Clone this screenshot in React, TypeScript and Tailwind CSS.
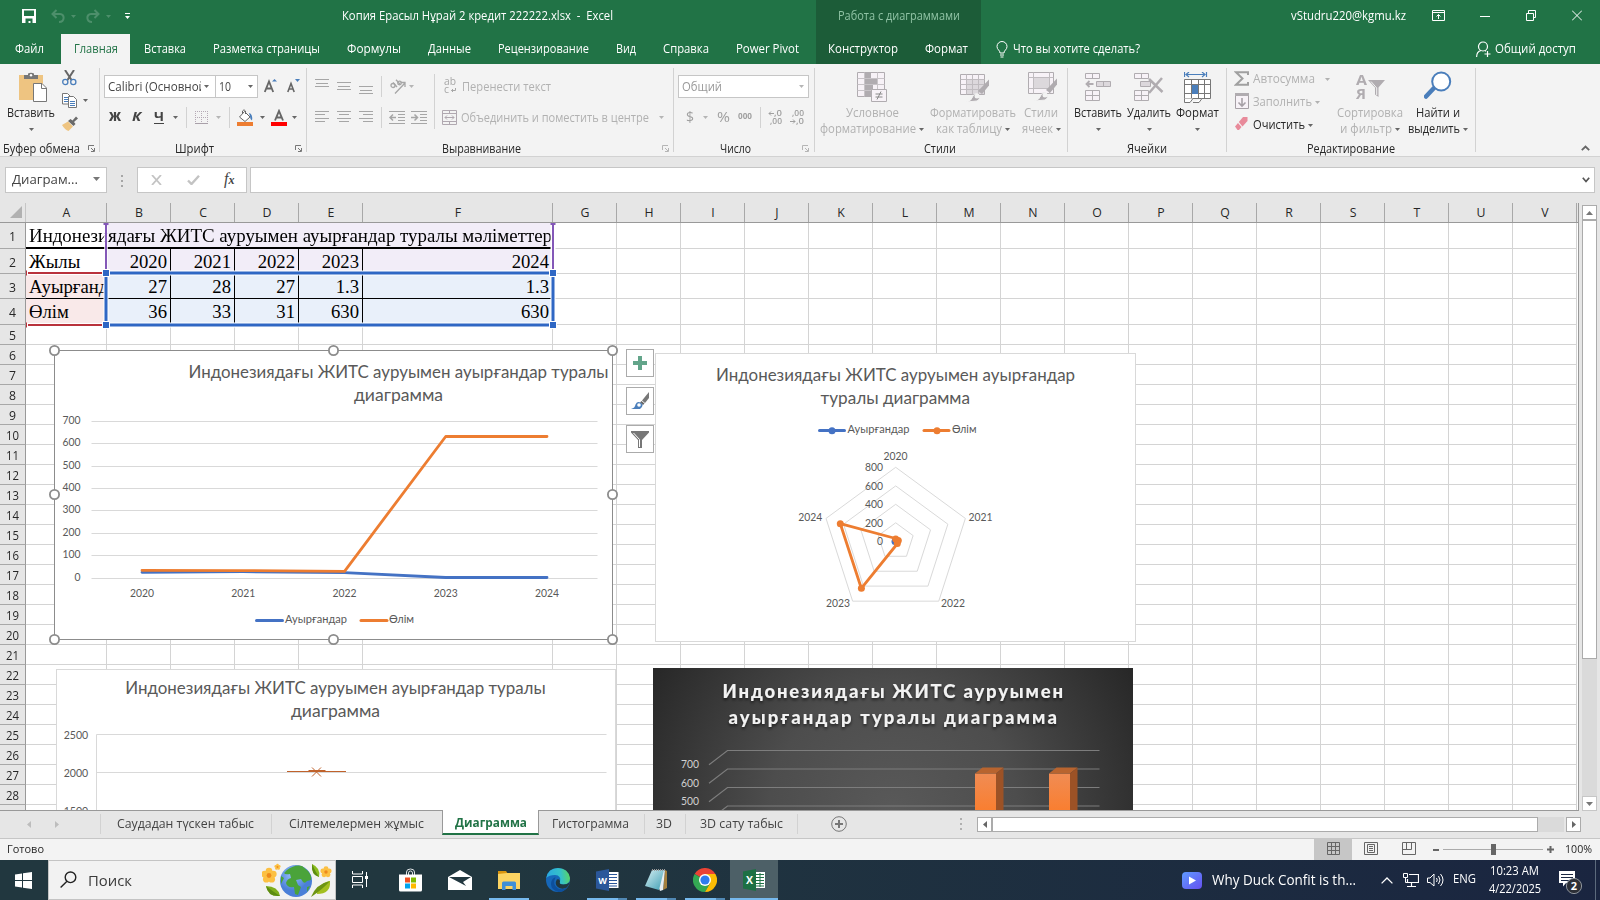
import { useLayoutEffect, useRef } from "react";
import type { ReactNode } from "react";

/* One-line label squeezed or stretched to the width of its box; `flat` drops the optical bottom padding. */
function Fit({ className = "", flat = false, children }: { className?: string; flat?: boolean; children: ReactNode }) {
  const outer = useRef<HTMLSpanElement>(null);
  const inner = useRef<HTMLSpanElement>(null);
  useLayoutEffect(() => {
    if (!outer.current || !inner.current) return;
    inner.current.style.transform = "none";
    const natural = inner.current.getBoundingClientRect().width;
    if (natural > 0) inner.current.style.transform = `scaleX(${outer.current.clientWidth / natural})`;
  });
  return (
    <span ref={outer} className={"block shrink-0 " + (flat ? "" : "pb-0.5 ") + className}>
      <span ref={inner} className="inline-block origin-left whitespace-pre align-top">
        {children}
      </span>
    </span>
  );
}

function Arrow({ className = "text-[#666]" }: { className?: string }) {
  return (
    <svg width="5" height="3" viewBox="0 0 5 3" className={"shrink-0 " + className}>
      <path d="M0 0h5L2.5 3z" fill="currentColor" />
    </svg>
  );
}

function Sep({ className = "" }: { className?: string }) {
  return <span className={"w-px shrink-0 bg-[#d2d2d2] " + className} />;
}

function Launcher({ className = "" }: { className?: string }) {
  return (
    <svg width="7" height="7" viewBox="0 0 7 7" className={"shrink-0 " + className}>
      <path d="M.5 5V.5H6M3 3l3 3M6.5 3v3.5H3" fill="none" stroke="currentColor" />
    </svg>
  );
}

/* ---------- title bar and tabs ---------- */

function TitleBar() {
  return (
    <header className="flex h-16 text-[11.8px] leading-4 text-white">
      <div className="w-[816px] bg-[#217346]">
        <div className="flex h-[34px] items-center pb-0.5">
          <svg width="14" height="14" viewBox="0 0 14 14" className="ml-[22px] shrink-0">
            <path d="M0 0h14v14H0z" fill="#fff" />
            <path d="M2 1.5h10V7H2zM3.5 9.5h7V14h-2v-2h-2v2h-3z" fill="#217346" />
          </svg>
          <svg width="14" height="14" viewBox="0 0 14 14" className="ml-[15px] shrink-0 text-[#4d8f6b]">
            <path d="M5.5 1L1.5 5l4 4M1.5 5H9c5 0 5 8-1 8" fill="none" stroke="currentColor" strokeWidth="2" />
          </svg>
          <Arrow className="ml-1.5 text-[#4d8f6b]" />
          <svg width="14" height="14" viewBox="0 0 14 14" className="ml-[10px] shrink-0 text-[#4d8f6b]">
            <path d="M8.5 1l4 4-4 4M12.5 5H5c-5 0-5 8 1 8" fill="none" stroke="currentColor" strokeWidth="2" />
          </svg>
          <Arrow className="ml-1.5 text-[#4d8f6b]" />
          <svg width="5" height="6" viewBox="0 0 5 6" className="ml-[14px] shrink-0">
            <path d="M0 0h5v1H0zM0 3h5L2.500 6z" fill="#fff" />
          </svg>
          <Fit className="ml-[212px] w-[271px]">Копия Ерасыл Нұрай 2 кредит 222222.xlsx  -  Excel</Fit>
        </div>
        <nav className="flex h-[30px] items-center">
          <Fit className="ml-[15px] w-[29px]">Файл</Fit>
          <div className="ml-[17px] flex h-[30px] w-[69px] items-center justify-center bg-[#f3f3f3] text-[#217346]">
            <Fit className="w-11">Главная</Fit>
          </div>
          <Fit className="ml-[14px] w-[42px]">Вставка</Fit>
          <Fit className="ml-[27px] w-[107px]">Разметка страницы</Fit>
          <Fit className="ml-[27px] w-[54px]">Формулы</Fit>
          <Fit className="ml-[27px] w-[43px]">Данные</Fit>
          <Fit className="ml-[27px] w-[91px]">Рецензирование</Fit>
          <Fit className="ml-[27px] w-[20px]">Вид</Fit>
          <Fit className="ml-[27px] w-[46px]">Справка</Fit>
          <Fit className="ml-[27px] w-[63px]">Power Pivot</Fit>
        </nav>
      </div>
      <div className="w-[165px] bg-[#1c5c38]">
        <div className="flex h-[34px] items-center pb-0.5 text-[#90c3a5]">
          <Fit className="ml-[22px] w-[122px]">Работа с диаграммами</Fit>
        </div>
        <div className="flex h-[30px] items-center">
          <Fit className="ml-3 w-[70px]">Конструктор</Fit>
          <Fit className="ml-[27px] w-[43px]">Формат</Fit>
        </div>
      </div>
      <div className="grow bg-[#217346]">
        <div className="flex h-[34px] items-center pb-0.5">
          <Fit className="ml-[310px] w-[115px]">vStudru220@kgmu.kz</Fit>
          <svg width="13" height="11" viewBox="0 0 13 11" fill="none" stroke="#fff" className="mb-0.5 ml-[26px] shrink-0">
            <path d="M.5.5h12v10H.5zM.5 2.500h12M6.500 9V4.500M4.500 6.500l2-2 2 2" />
          </svg>
          <span className="ml-[35px] h-px w-[10px] bg-white" />
          <svg width="10" height="11" viewBox="0 0 10 11" fill="none" stroke="#fff" className="mb-0.5 ml-[36px] shrink-0">
            <path d="M.5 3.500h7v7h-7zM2.500 3.500V.5h7v7H7.500" />
          </svg>
          <svg width="10" height="11" viewBox="0 0 10 11" fill="none" stroke="#fff" className="mb-0.5 ml-[36px] shrink-0">
            <path d="M0 .5l10 10M10 .5l-10 10" />
          </svg>
        </div>
        <div className="flex h-[30px] items-center">
          <svg width="12" height="17" viewBox="0 0 12 17" fill="none" stroke="#fff" className="ml-[15px] shrink-0">
            <path d="M4 12c0-3-3-3-3-6.500a5 5 0 0110 0C11 9 8 9 8 12zM4 14h4M4.500 16h3" />
          </svg>
          <Fit className="ml-[5px] w-[127px]">Что вы хотите сделать?</Fit>
          <svg width="15" height="17" viewBox="0 0 15 17" fill="none" stroke="#fff" strokeWidth="1.200" className="ml-[336px] shrink-0">
            <circle cx="7" cy="5.500" r="4.500" />
            <path d="M.6 16c0-4 2-6 4.500-6.500M9 9.500l1 .8M11.500 10v6M8.500 13h6" />
          </svg>
          <Fit className="ml-1 w-[81px]">Общий доступ</Fit>
        </div>
      </div>
    </header>
  );
}

/* ---------- ribbon ---------- */

function Group({ className, label, children }: { className: string; label: ReactNode; children: ReactNode }) {
  return (
    <section className={"flex h-[92px] shrink-0 " + className}>
      <div className="flex min-w-0 grow flex-col">
        <div className="h-[77px]">{children}</div>
        <div className="flex h-[15px] items-center">{label}</div>
      </div>
      <Sep className="mt-1 h-[84px]" />
    </section>
  );
}

function Big({ className = "", icon, first, second }: { className?: string; icon: ReactNode; first: ReactNode; second: ReactNode }) {
  return (
    <div className={"flex shrink-0 flex-col items-center pt-2 " + className}>
      <div className="flex h-[30px] items-center">{icon}</div>
      <div className="mt-[3px] flex h-4 items-center">{first}</div>
      <div className="flex h-4 items-center gap-[3px]">{second}</div>
    </div>
  );
}

function Lines({ className = "", d }: { className?: string; d: string }) {
  return (
    <svg width="14" height="12" viewBox="0 0 14 12" className={"shrink-0 text-[#a6a6a6] " + className}>
      <path d={d} stroke="currentColor" fill="none" />
    </svg>
  );
}

const GRAY = "text-[#b1b1b1]";

function Ribbon() {
  return (
    <div className="flex h-[93px] border-b border-[#d2d2d2] bg-[#f3f3f3] text-[11.8px] leading-4 text-[#262626]">
      <Group
        className="w-[100px]"
        label={
          <>
            <Fit className="ml-[3px] w-[77px]">Буфер обмена</Fit>
            <Launcher className="ml-[8px] text-[#777]" />
          </>
        }
      >
        <div className="flex">
          <Big
            className="w-[62px]"
            icon={
              <svg width="28" height="30" viewBox="0 0 28 30" className="ml-1">
                <path d="M0 3h24v25H0z" fill="#eec481" />
                <path d="M5 7V3h4V1.500Q12 0 15 1.500V3h4v4z" fill="#777" />
                <path d="M14.500 11.500H23l4.500 4.500v13.500h-13z" fill="#fff" stroke="#777" />
                <path d="M22.500 11.500V16.500h5" fill="none" stroke="#777" />
                <circle cx="12" cy="3.300" r="1.200" fill="#fff" />
              </svg>
            }
            first={<Fit className="w-12">Вставить</Fit>}
            second={<Arrow />}
          />
          <div className="flex flex-col pt-[6px]">
            <svg width="15" height="16" viewBox="0 0 15 16" fill="none">
              <path d="M3 0l6.500 10M12 0L5.500 10" stroke="#666" strokeWidth="2" />
              <circle cx="3.300" cy="12" r="2.600" stroke="#4a7ebb" strokeWidth="1.300" />
              <circle cx="11.300" cy="12" r="2.600" stroke="#4a7ebb" strokeWidth="1.300" />
            </svg>
            <div className="mt-[7px] flex h-[15px] items-center">
              <svg width="15" height="15" viewBox="0 0 15 15" fill="#fff" stroke="#777">
                <path d="M.5.5h5l3 3v7.500h-8z" />
                <path d="M2 4.500h4M2 6.500h4M2 8.500h4" stroke="#4a7ebb" />
                <path d="M6.500 3.500h5l3 3v8h-8z" />
                <path d="M8 8.500h5M8 10.500h5M8 12.500h5" stroke="#4a7ebb" />
              </svg>
              <Arrow className="ml-[6px] text-[#666]" />
            </div>
            <svg width="16" height="15" viewBox="0 0 16 15" className="mt-[8px]">
              <path d="M0 9l6-3.500 5 5L6.500 15Q3 14 0 9z" fill="#eec481" />
              <path d="M6 5l2.500-2 2 1.500L14 .5 16 2.500 12 6l1.500 2-2 2z" fill="#6a6a6a" />
            </svg>
          </div>
        </div>
      </Group>

      <Group
        className="w-[207px]"
        label={
          <>
            <Fit className="ml-[75px] w-[39px]">Шрифт</Fit>
            <Launcher className="ml-[81px] text-[#777]" />
          </>
        }
      >
        <div className="mt-[11px] flex h-[23px] items-center text-[#444]">
          <div className="ml-1 flex h-[23px] w-[112px] items-center border border-[#c6c6c6] bg-white pl-[3px]">
            <span className="w-[93px] overflow-hidden">
              <Fit className="w-[98px]">Calibri (Основной</Fit>
            </span>
            <Arrow className="ml-[3px] text-[#666]" />
          </div>
          <div className="-ml-px flex h-[23px] w-[43px] items-center border border-[#c6c6c6] bg-white pl-[3px]">
            <Fit className="w-[12px]">10</Fit>
            <Arrow className="ml-[17px] text-[#666]" />
          </div>
          <svg width="14" height="15" viewBox="0 0 14 15" className="mb-0.5 ml-1.5 shrink-0">
            <path d="M.8 14L5 3.500 9.200 14M2.500 10.500h5" fill="none" stroke="#666" strokeWidth="1.800" />
            <path d="M8 3.500h5L10.500 1z" fill="#4a7ebb" />
          </svg>
          <svg width="13" height="15" viewBox="0 0 13 15" className="mb-0.5 ml-[9px] shrink-0">
            <path d="M.8 14L4 5.500 7.200 14M2 11h4" fill="none" stroke="#666" strokeWidth="1.600" />
            <path d="M8 1h5l-2.500 3z" fill="#4a7ebb" />
          </svg>
        </div>
        <div className="mt-[7px] flex h-6 items-center text-[12.500px] font-bold text-[#444]">
          <Fit flat className="ml-[9px] w-3 font-extrabold">Ж</Fit>
          <Fit flat className="ml-[11px] w-[9px] italic">К</Fit>
          <Fit flat className="ml-[13px] w-[10px] border-b border-[#444] leading-[13px]">Ч</Fit>
          <Arrow className="ml-[9px] text-[#666]" />
          <Sep className="ml-2 h-[21px]" />
          <svg width="13" height="13" viewBox="0 0 13 13" className="ml-2 shrink-0">
            <path d="M.5 0v12M6.500 0v12M12.500 0v12M0 .5h13M0 6.500h13" stroke="#b5a9b5" strokeDasharray="1 1" fill="none" />
            <path d="M0 12.500h13" stroke="#a9a0a9" />
          </svg>
          <Arrow className="ml-2 text-[#b5b5b5]" />
          <Sep className="ml-2 h-[21px]" />
          <svg width="16" height="17" viewBox="0 0 16 17" className="ml-[7px] shrink-0">
            <path d="M7.500 2.500L13 8l-5 4.500L2.500 8zM5.500 5V2q1.500-2.500 3 0v3" fill="#fff" stroke="#666" />
            <path d="M12 4q4 1 3 7.500-2-1-2-4z" fill="#4a7ebb" />
            <path d="M0 13h16v4H0z" fill="#ed7d31" />
          </svg>
          <Arrow className="ml-[7px] text-[#666]" />
          <svg width="16" height="17" viewBox="0 0 16 17" className="ml-[6px] shrink-0">
            <path d="M4 11.500L8 2l4 9.500M5.500 8.500h5" fill="none" stroke="#666" strokeWidth="1.900" />
            <path d="M0 13h16v4H0z" fill="#f00" />
          </svg>
          <Arrow className="ml-[5px] text-[#666]" />
        </div>
      </Group>

      <Group
        className="w-[367px]"
        label={
          <>
            <Fit className="ml-[135px] w-[79px]">Выравнивание</Fit>
            <Launcher className="ml-[141px] text-[#b5b5b5]" />
          </>
        }
      >
        <div className={"flex pt-[10px] " + GRAY}>
          <div className="w-[127px]">
            <div className="flex h-6 items-center">
              <Lines className="mb-[7px] ml-2" d="M0 2.500h14M1 6.500h12M0 9.500h14" />
              <Lines className="ml-2" d="M0 2.500h14M1 6.500h12M0 9.500h14" />
              <Lines className="ml-2 mt-[8px]" d="M0 2.500h14M1 6.500h12M0 9.500h14" />
              <Sep className="ml-2 h-[21px]" />
              <svg width="16" height="15" viewBox="0 0 16 15" className="ml-2 shrink-0" fill="none" stroke="#a6a6a6">
                <path d="M5 14.500L15 4M15 8V3.500h-4.500" strokeWidth="1.300" />
                <circle cx="3" cy="6.500" r="2" strokeWidth="1.300" />
                <path d="M3 3.500l4 4.500M6 .8l4.500 5" strokeWidth="1.300" />
                <circle cx="9.500" cy="4" r="1.800" strokeWidth="1.300" />
              </svg>
              <Arrow className="ml-[3px] text-[#b5b5b5]" />
            </div>
            <div className="mt-[7px] flex h-6 items-center">
              <Lines className="ml-2" d="M0 .5h14M0 3.500h10M0 7.500h14M0 10.500h10" />
              <Lines className="ml-2" d="M0 .5h14M2 3.500h10M0 7.500h14M2 10.500h10" />
              <Lines className="ml-2" d="M0 .5h14M4 3.500h10M0 7.500h14M4 10.500h10" />
              <Sep className="ml-2 h-[21px]" />
              <svg width="16" height="13" viewBox="0 0 16 13" className="ml-[7px] shrink-0" fill="none" stroke="#a6a6a6">
                <path d="M0 .5h16M9 3.500h7M9 6.500h7M9 9.500h7M0 12.500h16" />
                <path d="M7 6.500H1M4 3.500L1 6.500l3 3" strokeWidth="1.500" />
              </svg>
              <svg width="16" height="13" viewBox="0 0 16 13" className="ml-1.5 shrink-0" fill="none" stroke="#a6a6a6">
                <path d="M0 .5h16M9 3.500h7M9 6.500h7M9 9.500h7M0 12.500h16" />
                <path d="M0 6.500h6.500M3.500 3.500l3 3-3 3" strokeWidth="1.500" />
              </svg>
            </div>
          </div>
          <Sep className="h-[55px]" />
          <div>
            <div className="mt-px flex h-6 items-center">
              <div className="mb-1 ml-[9px] flex w-3 flex-col text-[10px] leading-[9px] text-[#a6a6a6]">
                <Fit flat className="w-3">ab</Fit>
                <span className="flex h-2 items-center">
                  <Fit flat className="w-[5px]">c</Fit>
                  <svg width="5" height="5" viewBox="0 0 5 5" className="ml-0.5 mt-0.5" fill="none" stroke="currentColor">
                    <path d="M4.500 0v2.500H.5M2 1L.5 2.500 2 4" />
                  </svg>
                </span>
              </div>
              <Fit className="ml-1.5 w-[89px]">Перенести текст</Fit>
            </div>
            <div className="mt-1.5 flex h-6 items-center">
              <svg width="15" height="15" viewBox="0 0 15 15" className="ml-[7px] shrink-0" fill="none" stroke="#b0a8b0">
                <path d="M.5.5h14v14H.5zM.5 3.500h14M.5 11.500h14M7.500.5v3M7.500 11.500v3" />
                <path d="M3 7.500h9M5 5.500l-2 2 2 2M10 5.500l2 2-2 2" />
              </svg>
              <Fit flat className="ml-1 w-[188px]">Объединить и поместить в центре</Fit>
              <Arrow className="ml-[10px] text-[#b5b5b5]" />
            </div>
          </div>
        </div>
      </Group>

      <Group
        className="w-[141px]"
        label={
          <>
            <Fit className="ml-[46px] w-[31px]">Число</Fit>
            <Launcher className="ml-[51px] text-[#b5b5b5]" />
          </>
        }
      >
        <div className="ml-1 mt-[11px] flex h-[23px] w-[131px] items-center border border-[#c6c6c6] bg-white pl-[3px] text-[#999]">
          <Fit className="w-[40px]">Общий</Fit>
          <Arrow className="ml-[77px] text-[#b5b5b5]" />
        </div>
        <div className="mt-[7px] flex h-6 items-center text-[#a0a0a0]">
          <Fit className="ml-[12px] w-2 text-[15px]">$</Fit>
          <Arrow className="ml-[9px] text-[#b5b5b5]" />
          <Fit flat className="ml-[9px] w-[13px] text-[14.500px]">%</Fit>
          <Fit className="ml-2 w-[14px] text-[9px] font-bold">000</Fit>
          <Sep className="ml-2 h-[21px]" />
          <div className="ml-[7px] flex w-[14px] flex-col text-[8.300px] font-semibold leading-[8px]">
            <span className="flex items-center">
              <svg width="6" height="5" viewBox="0 0 6 5" fill="none" stroke="currentColor"><path d="M6 2.500H1M3 .5l-2 2 2 2" /></svg>
              <Fit flat className="w-2">,0</Fit>
            </span>
            <Fit flat className="ml-[2px] w-[12px]">,00</Fit>
          </div>
          <div className="ml-2 flex w-[14px] flex-col text-[8.300px] font-semibold leading-[8px]">
            <Fit flat className="ml-[2px] w-[12px]">,00</Fit>
            <span className="flex items-center">
              <svg width="6" height="5" viewBox="0 0 6 5" fill="none" stroke="currentColor"><path d="M0 2.500h5M3 .5l2 2-2 2" /></svg>
              <Fit flat className="w-2">,0</Fit>
            </span>
          </div>
        </div>
      </Group>

      <Group className="w-[253px]" label={<Fit className="ml-[109px] w-8">Стили</Fit>}>
        <div className={"flex " + GRAY}>
          <Big
            className="w-[114px]"
            icon={
              <svg width="31" height="30" viewBox="0 0 31 30">
                <path d="M.5.5h27v24H.5z" fill="#f7f2f7" stroke="#b0acb0" />
                <path d="M8 1h6v6H8zM8 7h12v6H8zM8 13h8v6H8zM8 19h6v6H8z" fill="#b0acb0" />
                <path d="M.5 6.500h27M.5 12.500h27M.5 18.500h27M7.500.5v24M20.500.5v24" stroke="#c8c4c8" fill="none" />
                <path d="M14.500 17.500h15v12h-15z" fill="#f7f2f7" stroke="#b0acb0" />
                <path d="M18.500 22h7M18.500 25h7M24 19.500l-4 8" stroke="#888" fill="none" />
              </svg>
            }
            first={<Fit className="w-[53px]">Условное</Fit>}
            second={
              <>
                <Fit className="w-[96px]">форматирование</Fit>
                <Arrow />
              </>
            }
          />
          <Big
            className="w-[87px]"
            icon={
              <svg width="30" height="30" viewBox="0 0 30 30" className="ml-1">
                <path d="M.5 2.500h24v20H.5z" fill="#f7f2f7" stroke="#b0acb0" />
                <path d="M6 8h18v14H6z" fill="#dcd8dc" />
                <path d="M.5 7.500h24M.5 12.500h24M.5 17.500h24M6.500 2.500v20M12.500 2.500v20M18.500 2.500v20" stroke="#c0bcc0" fill="none" />
                <path d="M29 7.500v6L22 22l-4-3z" fill="#b0acb0" />
                <path d="M6.500 30q5-1 6.500-6 2-4 5.500-1.500Q21 27 17 29z" fill="#b0acb0" stroke="#f3f3f3" />
                <circle cx="17" cy="24" r="2.500" fill="#f3f3f3" />
              </svg>
            }
            first={<Fit className="w-[86px]">Форматировать</Fit>}
            second={
              <>
                <Fit className="w-[66px]">как таблицу</Fit>
                <Arrow />
              </>
            }
          />
          <Big
            className="w-[50px]"
            icon={
              <svg width="30" height="30" viewBox="0 0 30 30" className="ml-1">
                <path d="M.5.5h25v21H.5z" fill="#f7f2f7" stroke="#b0acb0" />
                <path d="M6 6h15v10H6z" fill="#dcd8dc" />
                <path d="M.5 5.500h25M.5 16.500h25M5.500.5v21M21.500.5v21" stroke="#c0bcc0" fill="none" />
                <path d="M29 6.500v6L22 21l-4-3z" fill="#b0acb0" />
                <path d="M6.500 29q5-1 6.500-6 2-4 5.500-1.500Q21 26 17 28z" fill="#b0acb0" stroke="#f3f3f3" />
                <circle cx="17" cy="23" r="2.500" fill="#f3f3f3" />
              </svg>
            }
            first={<Fit className="w-[34px]">Стили</Fit>}
            second={
              <>
                <Fit className="w-[31px]">ячеек</Fit>
                <Arrow />
              </>
            }
          />
        </div>
      </Group>

      <Group className="w-[159px]" label={<Fit className="ml-[59px] w-10">Ячейки</Fit>}>
        <div className="flex pl-1">
          <Big
            className="w-[52px]"
            icon={
              <svg width="27" height="28" viewBox="0 0 27 28" fill="#f7f2f7" stroke="#b0acb0" className="mb-px">
                <path d="M.5.5h14v5H.5zM7.500.5v5M.5 17.500h14v10H.5zM.5 22.500h14M7.500 17.500v10" />
                <path d="M11.500 8.500h14v5h-14zM18.500 8.500v5" fill="#dcd8dc" />
                <path d="M1.500 11h7M4.500 8l-3 3 3 3" fill="none" strokeWidth="1.800" />
              </svg>
            }
            first={<Fit className="w-[48px]">Вставить</Fit>}
            second={<Arrow />}
          />
          <Big
            className="w-[50px]"
            icon={
              <svg width="30" height="28" viewBox="0 0 30 28" fill="#f7f2f7" stroke="#b0acb0" className="mb-px">
                <path d="M.5.5h14v5H.5zM7.500.5v5M.5 17.500h14v10H.5zM.5 22.500h14M7.500 17.500v10" />
                <path d="M6.500 8.500h10v5h-10z" fill="#dcd8dc" />
                <path d="M15 6l13.500 13M28 5L15 20" fill="none" strokeWidth="2.500" />
              </svg>
            }
            first={<Fit className="w-11">Удалить</Fit>}
            second={<Arrow />}
          />
          <Big
            className="w-[47px]"
            icon={
              <svg width="28" height="31" viewBox="0 0 28 31" fill="none" className="ml-px">
                <path d="M.5 0v5M22.500 0v5M2 2.500h19M5 0L2 2.500 5 5M18 0l3 2.500L18 5" stroke="#4a7ebb" strokeWidth="1.200" />
                <path d="M.5 7.500h26v19H.5zM7.500 7.500v19M14.500 7.500v19M20.500 7.500v19M.5 12.500h26M.5 21.500h26" stroke="#777" fill="#fff" />
                <path d="M8 13h6v9H8z" fill="#4a7ebb" />
                <path d="M.5 26.500v4H6l3-4M9 30.500h6l3-4" stroke="#777" fill="#fff" />
              </svg>
            }
            first={<Fit className="w-[43px]">Формат</Fit>}
            second={<Arrow />}
          />
        </div>
      </Group>

      <Group className="w-[249px]" label={<Fit className="ml-[80px] w-[88px]">Редактирование</Fit>}>
        <div className="flex">
          <div className={"w-[109px] pt-[4px] " + GRAY}>
            <div className="flex h-[22px] items-center">
              <svg width="15" height="15" viewBox="0 0 15 15" className="mb-0.5 ml-[7px] shrink-0">
                <path d="M14 4V1.200H2L8.500 7.500 2 13.800h12V11" fill="none" stroke="#a0a0a0" strokeWidth="2" />
              </svg>
              <Fit className="ml-1 w-[62px]">Автосумма</Fit>
              <Arrow className="ml-[10px]" />
            </div>
            <div className="mt-px flex h-[22px] items-center">
              <svg width="14" height="16" viewBox="0 0 14 16" className="mb-0.5 ml-2 shrink-0" fill="none" stroke="#a6a0a6">
                <path d="M.5.5h13v15H.5z" fill="#f7f2f7" />
                <path d="M0 0h14v3H0z" fill="#b0acb0" stroke="none" />
                <path d="M7 5v8M3.500 9.500L7 13l3.500-3.500" strokeWidth="1.600" />
              </svg>
              <Fit className="ml-1 w-[59px]">Заполнить</Fit>
              <Arrow className="ml-[3px]" />
            </div>
            <div className="mt-px flex h-[22px] items-center text-[#262626]">
              <svg width="13" height="13" viewBox="0 0 13 13" className="mb-[3px] ml-2 shrink-0">
                <path d="M8 0h4.500v4L7.500 9.500 3.800 5z" fill="#e88a9a" />
                <path d="M3 6l3.500 4L4 13H2.500L0 9.500z" fill="#e88a9a" />
              </svg>
              <Fit className="ml-[5px] w-[52px]">Очистить</Fit>
              <Arrow className="ml-[3px] text-[#666]" />
            </div>
          </div>
          <Big
            className={"w-[68px] " + GRAY}
            icon={
              <div className="flex gap-px text-[#b0acb0]">
                <div className="flex w-[11px] flex-col text-[14.500px] font-bold leading-[14px]">
                  <Fit flat className="w-[11px]">А</Fit>
                  <Fit flat className="w-[10px]">Я</Fit>
                </div>
                <svg width="17" height="18" viewBox="0 0 17 18" className="mt-[7px]">
                  <path d="M0 0h17L10.500 7.500V17L7 14.500v-7z" fill="#b0acb0" />
                  <path d="M3 1.500L8.700 8v7" stroke="#f3f3f3" fill="none" />
                </svg>
              </div>
            }
            first={<Fit className="w-[66px]">Сортировка</Fit>}
            second={
              <>
                <Fit className="w-[52px]">и фильтр</Fit>
                <Arrow />
              </>
            }
          />
          <Big
            className="w-[67px]"
            icon={
              <svg width="28" height="28" viewBox="0 0 28 28" className="mb-1">
                <path d="M10 17L2 25.500" stroke="#4a7ebb" strokeWidth="4.500" strokeLinecap="round" />
                <circle cx="17.200" cy="10.500" r="9" fill="#fff" stroke="#4a7ebb" strokeWidth="2" />
              </svg>
            }
            first={<Fit className="w-11">Найти и</Fit>}
            second={
              <>
                <Fit className="w-[52px]">выделить</Fit>
                <Arrow className="text-[#666]" />
              </>
            }
          />
        </div>
      </Group>
      <svg width="9" height="6" viewBox="0 0 9 6" className="ml-[105px] mt-[81px]">
        <path d="M.8 5.200l3.700-3.700 3.700 3.700" fill="none" stroke="#666" strokeWidth="1.800" />
      </svg>
    </div>
  );
}

function FormulaBar() {
  return (
    <div className="flex h-[46px] items-start bg-[#e6e6e6] pt-[10px] text-[#444]">
      <div className="ml-[5px] flex h-[26px] w-[102px] items-center border border-[#c6c6c6] bg-white pl-[6px] text-[13px]">
        <Fit flat className="w-[66px]">Диаграм...</Fit>
        <svg width="7" height="4" viewBox="0 0 7 4" className="mb-0.5 ml-[15px]">
          <path d="M0 0h7L3.500 4z" fill="#777" />
        </svg>
      </div>
      <div className="ml-[14px] mt-2 flex w-[2px] flex-col gap-[3px]">
        <i className="h-[2px] bg-[#a6a6a6]" />
        <i className="h-[2px] bg-[#a6a6a6]" />
        <i className="h-[2px] bg-[#a6a6a6]" />
      </div>
      <div className="ml-[14px] flex h-[26px] w-[110px] items-center border border-[#c6c6c6] bg-white">
        <svg width="11" height="10" viewBox="0 0 11 10" className="ml-[13px]">
          <path d="M1 0l9 10M10 0L1 10" stroke="#c3c3c3" strokeWidth="1.800" />
        </svg>
        <svg width="13" height="10" viewBox="0 0 13 10" className="ml-[25px]">
          <path d="M1 5.500l3.500 3.500L12 .8" stroke="#c3c3c3" strokeWidth="2.400" fill="none" />
        </svg>
        <span className="ml-[24px] pb-0.5 font-['Liberation_Serif',serif] text-[16px] italic leading-4 text-[#444]">
          f<span className="text-[12px] font-bold">x</span>
        </span>
      </div>
      <div className="ml-[3px] flex h-[26px] w-[1345px] items-center justify-end border border-[#c6c6c6] bg-white pr-[4px]">
        <svg width="8" height="6" viewBox="0 0 8 6">
          <path d="M.8.8L4 4.500 7.200.8" fill="none" stroke="#555" strokeWidth="1.700" />
        </svg>
      </div>
    </div>
  );
}

/* ---------- charts ---------- */

type TProps = { x: number; y: number; w?: number; s: number; a?: "start" | "middle" | "end"; f?: string; children: string };

/* Chart label: y is the vertical middle of the capitals. */
function T({ x, y, w, s, a = "start", f = "#595959", children }: TProps) {
  return (
    <text x={x} y={y + s * 0.36} fontSize={s} textAnchor={a} fill={f} textLength={w} lengthAdjust="spacingAndGlyphs">
      {children}
    </text>
  );
}

const CHART = "absolute font-[Lato,'Open_Sans',sans-serif]";

function LineChart() {
  const ticks = [421.5, 443.5, 466.5, 488.5, 510.5, 533.5, 555.5, 578.5];
  const years = [142, 243.2, 344.5, 445.7, 547];
  const handles = [
    [54.5, 350.5], [333.5, 350.5], [612.5, 350.5], [54.5, 494.5], [612.5, 494.5], [54.5, 639.5], [333.5, 639.5], [612.5, 639.5],
  ];
  return (
    <svg className={CHART + " left-[44px] top-[137px]"} width="580" height="310" viewBox="44 340 580 310">
      <rect x="54.500" y="350.500" width="558" height="289" fill="#fff" stroke="#8c8c8c" />
      <T x={188.500} y={371.500} w={420} s={17}>Индонезиядағы ЖИТС ауруымен ауырғандар туралы</T>
      <T x={354} y={394.500} w={89} s={17}>диаграмма</T>
      {ticks.map((y, i) => (
        <g key={y}>
          <path d={`M91.500 ${y}H597.500`} stroke="#d9d9d9" />
          <T x={80.500} y={y - 1} w={i === 7 ? 6 : 18} s={10.800} a="end">{String(700 - i * 100)}</T>
        </g>
      ))}
      {years.map((x, i) => (
        <T key={x} x={x} y={593.300} w={24} s={10.800} a="middle">{String(2020 + i)}</T>
      ))}
      <path d="M142 572.300L243 571.700 344.500 572.600 445.700 577.500H547" fill="none" stroke="#4472c4" strokeWidth="2.800" strokeLinecap="round" />
      <path d="M142 570.300L243 570.600 344.500 571.300 445.700 436.500H547" fill="none" stroke="#ed7d31" strokeWidth="2.800" strokeLinecap="round" strokeLinejoin="round" />
      <path d="M256.500 620.500H282.500" stroke="#4472c4" strokeWidth="3" strokeLinecap="round" />
      <T x={285} y={619.500} w={62} s={10.800}>Ауырғандар</T>
      <path d="M361 620.500H387" stroke="#ed7d31" strokeWidth="3" strokeLinecap="round" />
      <T x={389} y={619.500} w={25} s={10.800}>Өлім</T>
      {handles.map(([x, y]) => (
        <circle key={`${x}-${y}`} cx={x} cy={y} r="4.600" fill="#fff" stroke="#8c8c8c" strokeWidth="1.800" />
      ))}
    </svg>
  );
}

function ChartButtons() {
  return (
    <div className="absolute left-[626px] top-[146px] flex flex-col gap-[10px]">
      <span className="flex h-7 w-7 items-center justify-center border border-[#ababab] bg-white">
        <svg width="14" height="14" viewBox="0 0 14 14">
          <path d="M5 0h4v5h5v4H9v5H5V9H0V5h5z" fill="#63a58a" />
        </svg>
      </span>
      <span className="flex h-7 w-7 items-center justify-center border border-[#ababab] bg-white">
        <svg width="18" height="18" viewBox="0 0 18 18">
          <path d="M18 0v6l-4 5-3-2.500z" fill="#777" />
          <path d="M10.500 9l3 2.500-1.500 1.500L9 10.500z" fill="#666" />
          <path d="M0 17q4-1 4.500-4.500Q6.500 8.500 10 11t-1 6z" fill="#4a7ebb" />
          <circle cx="8" cy="13" r="1.800" fill="#fff" />
        </svg>
      </span>
      <span className="flex h-7 w-7 items-center justify-center border border-[#ababab] bg-white">
        <svg width="18" height="17" viewBox="0 0 18 17">
          <path d="M0 0h18v1.500L11 9v8H7V9L0 1.500z" fill="#777" />
          <path d="M2.500 2L8.500 8.500V16" stroke="#fff" fill="none" />
        </svg>
      </span>
    </div>
  );
}

function RadarChart() {
  const cx = 895.7;
  const cy = 541.3;
  const ring = (r: number) =>
    [0, 1, 2, 3, 4]
      .map((i) => {
        const t = (i * 2 * Math.PI) / 5;
        return `${cx + r * 0.99 * Math.sin(t)},${cy - r * Math.cos(t)}`;
      })
      .join(" ");
  const labels = [467.3, 486, 504.3, 523.3, 541];
  return (
    <svg className={CHART + " left-[655px] top-[150px]"} width="481" height="289" viewBox="655 353 481 289">
      <rect x="655.500" y="353.500" width="480" height="288" fill="#fff" stroke="#d9d9d9" />
      <T x={716} y={374.500} w={359} s={17}>Индонезиядағы ЖИТС ауруымен ауырғандар</T>
      <T x={820.500} y={397.500} w={149.500} s={17}>туралы диаграмма</T>
      <path d="M819.500 430.500H844.500" stroke="#4472c4" strokeWidth="3" strokeLinecap="round" />
      <circle cx="832" cy="430.800" r="3.500" fill="#4472c4" />
      <T x={847.500} y={429} w={62} s={11}>Ауырғандар</T>
      <path d="M924 430.500H949" stroke="#ed7d31" strokeWidth="3" strokeLinecap="round" />
      <circle cx="937" cy="430.800" r="3.500" fill="#ed7d31" />
      <T x={952} y={429} w={24.500} s={11}>Өлім</T>
      {[18.5, 37, 55.4, 74].map((r) => (
        <polygon key={r} points={ring(r)} fill="none" stroke="#d9d9d9" />
      ))}
      {labels.map((y, i) => (
        <T key={y} x={883} y={y} w={i === 4 ? 6 : 18} s={11} a="end">{String(800 - i * 200)}</T>
      ))}
      <T x={895.500} y={456} w={24} s={11} a="middle">2020</T>
      <T x={968.500} y={517} w={24} s={11}>2021</T>
      <T x={941} y={603.300} w={24} s={11}>2022</T>
      <T x={826} y={603.300} w={24} s={11}>2023</T>
      <T x={798.300} y={517} w={24} s={11}>2024</T>
      <circle cx="895" cy="541.500" r="3.500" fill="#4472c4" />
      <path d="M895.700 538.500L898.500 540.500 897.500 543.500 861.300 588.300 840.300 523.700z" fill="none" stroke="#ed7d31" strokeWidth="2.800" strokeLinejoin="round" />
      {[[895.7, 539], [898.3, 540.6], [897.3, 543.6], [861.4, 588.3], [840.3, 523.7]].map(([x, y]) => (
        <circle key={x} cx={x} cy={y} r="3.500" fill="#ed7d31" />
      ))}
    </svg>
  );
}

function BoxChart() {
  return (
    <svg className={CHART + " left-[56px] top-[466px]"} width="561" height="150" viewBox="56 669 561 150">
      <rect x="56.500" y="669.500" width="559" height="290" fill="#fff" stroke="#d9d9d9" />
      <T x={125.200} y={687.500} w={420.500} s={17}>Индонезиядағы ЖИТС ауруымен ауырғандар туралы</T>
      <T x={291} y={710.500} w={89} s={17}>диаграмма</T>
      <path d="M96.500 840V734.500H606.500M96.500 772.500H606.500" fill="none" stroke="#d9d9d9" />
      <T x={63.700} y={735} w={24.500} s={10.800}>2500</T>
      <T x={63.700} y={773} w={24.500} s={10.800}>2000</T>
      <T x={63.700} y={811} w={24.500} s={10.800}>1500</T>
      <path d="M287 771.500H346M308.500 770.500H325.500" stroke="#c0622b" />
      <path d="M312 767.500l9 9M321 767.500l-9 9" stroke="#c0622b" />
    </svg>
  );
}

function DarkChart() {
  return (
    <svg className={CHART + " left-[653px] top-[465px]"} width="480" height="150" viewBox="653 668 480 150">
      <defs>
        <radialGradient id="dark" gradientUnits="userSpaceOnUse" cx="893" cy="812" r="275">
          <stop offset="0" stopColor="#595959" />
          <stop offset="0.450" stopColor="#4d4d4d" />
          <stop offset="1" stopColor="#282828" />
        </radialGradient>
        <linearGradient id="bar" x1="0" x2="0" y1="0" y2="1">
          <stop offset="0" stopColor="#f08c54" />
          <stop offset="1" stopColor="#fa7d2d" />
        </linearGradient>
        <filter id="sh" x="-5%" y="-20%" width="110%" height="160%">
          <feDropShadow dx="0" dy="2" stdDeviation="1.500" floodColor="#000" floodOpacity="0.600" />
        </filter>
      </defs>
      <rect x="653" y="668" width="480" height="288" fill="url(#dark)" />
      <g filter="url(#sh)" fontWeight="900">
        <text x="722.500" y="698" fontSize="18.500" fill="#f2f2f2" letterSpacing="1" textLength="341.500" lengthAdjust="spacing">
          Индонезиядағы ЖИТС ауруымен
        </text>
        <text x="728.500" y="724" fontSize="18.500" fill="#f2f2f2" letterSpacing="1" textLength="329.500" lengthAdjust="spacing">
          ауырғандар туралы диаграмма
        </text>
      </g>
      {[750.5, 769, 787.5, 806].map((y) => (
        <path key={y} d={`M709 ${y + 14.3}L727.500 ${y}H1099.500`} fill="none" stroke="#7d7d7d" strokeWidth="1.200" />
      ))}
      <T x={681} y={764.500} w={18} s={11} f="#d0d0d0">700</T>
      <T x={681} y={783.300} w={18} s={11} f="#d0d0d0">600</T>
      <T x={681} y={801.500} w={18} s={11} f="#d0d0d0">500</T>
      {[975, 1049].map((x) => (
        <g key={x}>
          <path d={`M${x} 773.500h21v40h-21z`} fill="url(#bar)" />
          <path d={`M${x} 773.500l7.500-6h21l-7.500 6z`} fill="#b8642f" />
          <path d={`M${x + 21} 773.500l7.500-6v50h-7.500z`} fill="#9c5226" />
        </g>
      ))}
    </svg>
  );
}

/* ---------- sheet ---------- */

const COLS: [string, string][] = [
  ["A", "w-[81px]"], ["B", "w-16"], ["C", "w-16"], ["D", "w-16"], ["E", "w-16"], ["F", "w-[190px]"],
  ..."GHIJKLMNOPQRSTUV".split("").map((c): [string, string] => [c, "w-16"]),
];

const DATA: Record<number, string[]> = {
  2: ["Жылы", "2020", "2021", "2022", "2023", "2024"],
  3: ["Ауырғандар", "27", "28", "27", "1.3", "1.3"],
  4: ["Өлім", "36", "33", "31", "630", "630"],
};

function rowHeight(n: number) {
  if (n === 1 || n === 4) return "h-[26px]";
  if (n === 2 || n === 3) return "h-[25px]";
  return "h-5";
}

function cellFill(n: number, c: number) {
  if (c > 5 || n > 4) return "";
  if (c === 0) return n > 2 ? " bg-[#f9e9e9]" : "";
  return n > 2 ? " bg-[#e9f0fa]" : " bg-[#f2edf8]";
}

function cellLine(n: number, c: number) {
  if (c > 5 || n > 4) return " border-[#d4d4d4]";
  const right = n === 1 || c === 0 ? " border-r-transparent" : c < 5 ? " border-r-black" : " border-r-[#d4d4d4]";
  const bottom = n === 1 || n === 3 ? " border-b-black" : n === 2 ? " border-b-transparent" : " border-b-[#d4d4d4]";
  return right + bottom;
}

function RangeMarks() {
  return (
    <svg className="absolute left-[20px] top-[17px]" width="545" height="115" viewBox="20 220 545 115" fill="none">
      <path d="M26 248H551" stroke="#000" strokeWidth="2" />
      <path d="M26.500 273H104M26.500 325H104" stroke="#fff" strokeWidth="4" />
      <path d="M26.500 270.500v5M26.500 322.500v5" stroke="#b9323c" />
      <path d="M28 273H104M28 325H104" stroke="#b9323c" strokeWidth="2" />
      <path d="M553 223V270" stroke="#fff" strokeWidth="5" />
      <path d="M106 226V270" stroke="#fff" strokeWidth="3.500" />
      <path d="M106 224V270M553 224V270" stroke="#8458b8" strokeWidth="2" />
      <path d="M103.500 223h5v2h-5zM550.500 223h5v2h-5z" fill="#8458b8" />
      <path d="M106 273H553V325H106z" stroke="#fff" strokeWidth="5" />
      <path d="M106 273H553V325H106z" stroke="#2f67c4" strokeWidth="3" />
      {[[106, 273], [553, 273], [106, 325], [553, 325]].map(([x, y]) => (
        <rect key={`${x}-${y}`} x={x - 3.5} y={y - 3.5} width="7" height="7" fill="#2f67c4" stroke="#fff" />
      ))}
    </svg>
  );
}

function Sheet() {
  const rows = Array.from({ length: 29 }, (_, i) => i + 1);
  return (
    <div className="flex h-[608px] bg-[#e6e6e6]">
      <div className="relative h-[608px] w-[1579px] overflow-hidden border-b border-r border-[#999] bg-white">
        <div className="flex h-5 border-b border-[#999] bg-[#e6e6e6] text-[12.300px] leading-[18px] text-[#262626]">
          <div className="flex w-[26px] items-end justify-end border-r border-[#c6c6c6] pb-1 pr-[3px]">
            <svg width="12" height="12" viewBox="0 0 12 12">
              <path d="M12 0v12H0z" fill="#b1b1b1" />
            </svg>
          </div>
          {COLS.map(([c, w]) => (
            <div key={c} className={"shrink-0 border-r border-[#a8a8a8] pl-px pt-px text-center " + w}>{c}</div>
          ))}
        </div>
        {rows.map((n) => (
          <div key={n} className={"flex w-[1640px] " + rowHeight(n)}>
            <div className="flex w-[26px] shrink-0 items-center justify-center border-b border-r border-b-[#a8a8a8] border-r-[#999] bg-[#e6e6e6] pt-[3px] text-[12.300px] leading-4 text-[#262626]">
              {n < 29 && <Fit flat className={n < 10 ? "w-[7px]" : "w-[13px]"}>{n}</Fit>}
            </div>
            {COLS.map(([c, w], i) => (
              <div
                key={c}
                className={
                  "flex shrink-0 items-center border-b border-r pt-0.5 font-['Liberation_Serif',serif] text-[18.700px] leading-none text-black " +
                  w + cellLine(n, i) + cellFill(n, i) +
                  (i === 0 ? " pl-[3px]" : " justify-end pr-[3px]") +
                  (n > 1 && i === 0 ? " overflow-hidden" : "")
                }
              >
                {n === 1 && i === 0 && (
                  <Fit flat className="relative z-10 w-[523px]">Индонезиядағы ЖИТС ауруымен ауырғандар туралы мәліметтер</Fit>
                )}
                {DATA[n]?.[i]}
              </div>
            ))}
          </div>
        ))}
        <div className="absolute left-0 top-0 z-20">
          <RangeMarks />
          <RadarChart />
          <LineChart />
          <ChartButtons />
          <BoxChart />
          <DarkChart />
        </div>
      </div>
      <div className="ml-[3px] flex w-[15px] flex-col pt-[2px]">
        <div className="flex h-[15px] items-center justify-center border border-[#ababab] bg-white">
          <svg width="7" height="4" viewBox="0 0 7 4"><path d="M0 4h7L3.500 0z" fill="#777" /></svg>
        </div>
        <div className="h-[439px] border border-[#ababab] bg-white" />
        <div className="h-[137px] bg-[#dadada]" />
        <div className="flex h-[15px] items-center justify-center border border-[#c6c6c6] bg-white">
          <svg width="7" height="4" viewBox="0 0 7 4"><path d="M0 0h7L3.500 4z" fill="#777" /></svg>
        </div>
      </div>
    </div>
  );
}

function SheetTabs() {
  return (
    <div className="flex h-7 items-start border-b border-[#c6c6c6] bg-[#e6e6e6] text-[13px] text-[#444]">
      <div className="flex h-[26px] items-center leading-5">
        <svg width="4" height="7" viewBox="0 0 4 7" className="ml-[27px]"><path d="M4 0v7L0 3.500z" fill="#bdbdbd" /></svg>
        <svg width="4" height="7" viewBox="0 0 4 7" className="ml-[24px]"><path d="M0 0v7l4-3.500z" fill="#bdbdbd" /></svg>
        <Sep className="ml-[41px] h-5 bg-[#a0a0a0]" />
        <Fit className="ml-4 w-[137px]">Саудадан түскен табыс</Fit>
        <Sep className="ml-[17px] h-5 bg-[#a0a0a0]" />
        <Fit className="ml-[17px] w-[135px]">Сілтемелермен жұмыс</Fit>
        <div className="relative z-30 -mt-[3px] ml-[18px] flex h-[25px] w-[97px] items-center justify-center border-x border-b-2 border-x-[#999] border-b-[#217346] bg-white font-bold text-[#217346]">
          <Fit className="mt-0.5 w-[72px]">Диаграмма</Fit>
        </div>
        <Fit className="ml-[13px] w-[77px]">Гистограмма</Fit>
        <Sep className="ml-[15px] h-5 bg-[#a0a0a0]" />
        <Fit className="ml-[11px] w-4">3D</Fit>
        <Sep className="ml-[13px] h-5 bg-[#a0a0a0]" />
        <Fit className="ml-[14px] w-[83px]">3D сату табыс</Fit>
        <Sep className="ml-[14px] h-5 bg-[#a0a0a0]" />
        <svg width="16" height="16" viewBox="0 0 16 16" className="ml-[33px]">
          <circle cx="8" cy="8" r="7.300" fill="none" stroke="#777" />
          <path d="M8 4v8M4 8h8" stroke="#777" strokeWidth="2" />
        </svg>
        <div className="ml-[113px] flex w-[2px] flex-col gap-[3px]">
          <i className="h-[2px] bg-[#b0b0b0]" />
          <i className="h-[2px] bg-[#b0b0b0]" />
          <i className="h-[2px] bg-[#b0b0b0]" />
        </div>
        <div className="ml-[15px] flex h-[15px] w-[604px]">
          <div className="flex w-[15px] items-center justify-center border border-[#ababab] bg-white">
            <svg width="4" height="7" viewBox="0 0 4 7"><path d="M4 0v7L0 3.500z" fill="#666" /></svg>
          </div>
          <div className="w-[546px] border border-[#ababab] bg-white" />
          <div className="w-[26px] bg-[#dadada]" />
          <div className="ml-[2px] flex w-[15px] items-center justify-center border border-[#ababab] bg-white">
            <svg width="4" height="7" viewBox="0 0 4 7"><path d="M0 0v7l4-3.500z" fill="#666" /></svg>
          </div>
        </div>
      </div>
    </div>
  );
}

function StatusBar() {
  return (
    <div className="flex h-[21px] items-center bg-[#f3f3f3] text-[11.500px] text-[#262626]">
      <Fit className="ml-[7px] w-[37px]">Готово</Fit>
      <div className="ml-[1270px] flex h-[21px] w-[38px] items-center justify-center bg-[#c6c6c6] pb-0.5">
        <svg width="13" height="13" viewBox="0 0 13 13" fill="none" stroke="#666">
          <path d="M.5.5h12v12H.5zM4.500.5v12M8.500.5v12M.5 4.500h12M.5 8.500h12" />
        </svg>
      </div>
      <svg width="14" height="13" viewBox="0 0 14 13" fill="none" stroke="#666" className="mb-0.5 ml-3">
        <path d="M.5.5h13v12H.5zM3.500 2.500h7v8h-7zM5 4.500h4M5 6.500h4M5 8.500h4" />
      </svg>
      <svg width="14" height="13" viewBox="0 0 14 13" fill="none" stroke="#666" className="mb-0.5 ml-6">
        <path d="M.5.5h13v12H.5zM4.500.5v7M9.500.5v7M.5 7.500h9" />
      </svg>
      <i className="ml-[17px] h-[2px] w-[6px] bg-[#666]" />
      <div className="ml-1 flex h-3 w-[100px] items-center">
        <i className="h-px w-12 bg-[#ababab]" />
        <i className="h-[11px] w-[5px] bg-[#666]" />
        <i className="h-px w-[47px] bg-[#ababab]" />
      </div>
      <svg width="7" height="7" viewBox="0 0 7 7" className="ml-[4px]">
        <path d="M3.500 0v7M0 3.500h7" stroke="#666" strokeWidth="2" />
      </svg>
      <Fit className="ml-[11px] w-[27px]">100%</Fit>
    </div>
  );
}

/* ---------- taskbar ---------- */

function Flower({ x, y, r }: { x: number; y: number; r: number }) {
  return (
    <g>
      {[0, 72, 144, 216, 288].map((d) => {
        const t = (d * Math.PI) / 180;
        return <circle key={d} cx={x + r * 0.6 * Math.sin(t)} cy={y - r * 0.6 * Math.cos(t)} r={r * 0.45} fill="#fcc043" />;
      })}
      <circle cx={x} cy={y} r={r * 0.32} fill="#ee8a1c" />
    </g>
  );
}

function Taskbar() {
  const under = "flex h-10 shrink-0 flex-col items-center";
  return (
    <footer className="flex h-10 items-center bg-linear-to-r from-[#21373f] from-30% to-[#1a2540] text-white">
      <svg width="17" height="17" viewBox="0 0 17 17" className="ml-[15px] shrink-0">
        <path d="M0 2.500L7 1.500V8H0zM8 1.300L17 0v8H8zM0 9h7v6.500l-7-1zM8 9h9v8l-9-1.300z" fill="#fff" />
      </svg>
      <div className="ml-4 flex h-10 w-[288px] items-center border border-[#c4c4c4] bg-[#f2f2f2] text-[15px] text-[#3b3b3b]">
        <svg width="17" height="17" viewBox="0 0 17 17" fill="none" stroke="#222" strokeWidth="1.400" className="mb-px ml-[11px]">
          <circle cx="10.500" cy="6.300" r="5.300" />
          <path d="M7 10.200L.6 16.500" />
        </svg>
        <Fit flat className="ml-[11px] w-[44px]">Поиск</Fit>
        <svg width="70" height="36" viewBox="0 0 70 36" className="ml-[130px]">
          <defs>
            <radialGradient id="sea" cx="0.400" cy="0.300">
              <stop offset="0" stopColor="#9cc4ff" />
              <stop offset="1" stopColor="#4a7fd8" />
            </radialGradient>
          </defs>
          <path d="M4 24q12 0 14 10Q6 35 4 24z" fill="#7fae1c" />
          <path d="M4 24q6 5 14 10-12 1-14-10z" fill="#5d8c12" />
          <path d="M50 2q9 4 7 13-8-2-7-13z" fill="#8bbd1e" />
          <path d="M50 2q3 7 7 13-8-2-7-13z" fill="#5d8c12" />
          <path d="M68 19q1 13-13 13 0-10 13-13z" fill="#a3bf20" />
          <path d="M68 19q-7 8-19 16 5-13 19-16z" fill="#6d9414" />
          <circle cx="34" cy="19" r="16" fill="url(#sea)" />
          <path d="M25 8q8-6 15-4l6 5q4 5 3 9l-4 1q-2 3-4 1l-2-3-5 1 2 5 3 2-3 8-3-1-1-7q-7 1-8-4 1-4 5-5l-1-4q-5 1-6-1zM19 14l3 2-3 6z" fill="#4aa33a" />
          <path d="M45 25l3-1-3 6z" fill="#4aa33a" />
          <Flower x={7} y={13.500} r={7.500} />
          <Flower x={15.500} y={5} r={3} />
          <Flower x={64} y={10} r={5.500} />
        </svg>
      </div>
      <svg width="16" height="17" viewBox="0 0 16 17" fill="none" stroke="#fff" className="mb-px ml-4 shrink-0">
        <path d="M.5 0v3h10V0M.5 17v-3h10v3M.5 5.500h10v6H.5zM14.500 1v15" />
        <path d="M13 5h3v3h-3z" fill="#fff" stroke="none" />
      </svg>
      <svg width="23" height="24" viewBox="0 0 23 24" className="mb-px ml-[31px] shrink-0">
        <path d="M7.500 8V4q0-3 4-3t4 3v4M9.500 8V5q0-2 2-2t2 2v3" fill="none" stroke="#dfe4e6" />
        <path d="M0 6.500h23V22q0 1.500-1.500 1.500h-20Q0 23.500 0 22z" fill="#fff" />
        <path d="M6 9.500h5v5H6z" fill="#f25022" /><path d="M12 9.500h5v5h-5z" fill="#7fba00" />
        <path d="M6 15.500h5v5H6z" fill="#00a4ef" /><path d="M12 15.500h5v5h-5z" fill="#ffb900" />
      </svg>
      <svg width="24" height="20" viewBox="0 0 24 20" className="ml-[26px] shrink-0">
        <path d="M0 7L12 0l12 7v13H0z" fill="#fff" />
        <path d="M1 7h22l-8 5 3 4z" fill="#21373f" />
      </svg>
      <div className={"ml-[17px] w-10 " + under}>
        <svg width="22" height="19" viewBox="0 0 22 19" className="mt-[11px]">
          <path d="M0 0h8l2 3H0z" fill="#d9950f" />
          <path d="M0 3l9-1h13v16H0z" fill="#fcd462" />
          <path d="M4 19v-7q0-1.500 1.500-1.500h11Q18 10.500 18 12v7h-3.500v-4h-7v4z" fill="#3f8fd6" />
        </svg>
        <i className="mt-auto h-[2px] w-10 bg-[#76b9ed]" />
      </div>
      <svg width="24" height="24" viewBox="0 0 24 24" className="mb-px ml-[17px] shrink-0">
        <defs>
          <linearGradient id="edge" x1="0" x2="1" y1="0.300" y2="0.200">
            <stop offset="0" stopColor="#2aa8e0" />
            <stop offset="0.600" stopColor="#35c1c8" />
            <stop offset="1" stopColor="#5ed65a" />
          </linearGradient>
        </defs>
        <circle cx="12" cy="12" r="12" fill="#1667b8" />
        <path d="M.3 10Q2 0 12 0t12 10q0 6-6.500 6.500-5 0-3.500-3 1.500-6-5-6.500Q3 7 .3 10z" fill="url(#edge)" />
        <path d="M9.500 9Q6 17 12 20.500q5 2 9.500-1.500-3 5-9 5Q5 22 5 16q0-5 4.500-7z" fill="#0d4f9c" />
        <path d="M14 13.500q-1.500 3 3.500 3 4 0 6.300-2.500-1 4-3 5.500-5 2.500-9-.5-3.500-3-1-7.500 3-1 3.200 2z" fill="#21373f" />
      </svg>
      <div className={"ml-[17px] w-10 " + under}>
        <svg width="23" height="22" viewBox="0 0 23 22" className="mt-[9px]">
          <path d="M12 3h10.500v16H12z" fill="#fff" />
          <path d="M13 5.500h8M13 8.500h8M13 11.500h8M13 14.500h8M13 17h8" stroke="#2b579a" />
          <path d="M0 2.500L13 0v22L0 19.500z" fill="#2b579a" />
          <text x="6.500" y="14.500" fontSize="9" fontWeight="700" textAnchor="middle" fill="#fff">W</text>
        </svg>
        <div className="mt-auto flex h-[2px] w-10"><i className="w-[31px] bg-[#76b9ed]" /><i className="grow bg-[#5188b4]" /></div>
      </div>
      <div className={"ml-[9px] w-10 " + under}>
        <svg width="22" height="23" viewBox="0 0 22 23" className="mt-[8px]">
          <defs>
            <linearGradient id="note" x1="0" x2="1" y1="0" y2="1">
              <stop offset="0" stopColor="#d6eef2" />
              <stop offset="1" stopColor="#3f9fb4" />
            </linearGradient>
          </defs>
          <path d="M20 2l2 1v17l-4 2z" fill="#a5803d" />
          <path d="M7 2h13l-2 20-3 1z" fill="#e8eef0" />
          <path d="M7 2h12l-5 20L0 18z" fill="url(#note)" />
          <path d="M7 2h13" stroke="#999" strokeWidth="2" strokeDasharray="1 1" />
        </svg>
        <div className="mt-auto flex h-[2px] w-10"><i className="w-[31px] bg-[#76b9ed]" /><i className="grow bg-[#5188b4]" /></div>
      </div>
      <div className={"ml-[9px] w-10 " + under}>
        <svg width="24" height="24" viewBox="0 0 24 24" className="mt-2">
          <path d="M12 12L1.600 6A12 12 0 0122.400 6z" fill="#ea4335" />
          <path d="M1.600 6A12 12 0 0012 24l5.200-9L12 12z" fill="#34a853" />
          <path d="M22.400 6H12l5.200 9L12 24A12 12 0 0022.400 6z" fill="#fbbc04" />
          <circle cx="12" cy="12" r="6" fill="#fff" />
          <circle cx="12" cy="12" r="4.600" fill="#2e7cf0" />
        </svg>
        <div className="mt-auto flex h-[2px] w-10"><i className="w-[31px] bg-[#76b9ed]" /><i className="grow bg-[#5188b4]" /></div>
      </div>
      <div className={"ml-[5px] w-12 bg-[#4d6067] " + under}>
        <svg width="22" height="22" viewBox="0 0 22 22" className="mt-[9px]">
          <path d="M12 3h10v16H12z" fill="#fff" />
          <path d="M13 5.500h8M13 8.500h8M13 11.500h8M13 14.500h8M13 17h8M17 4v14" stroke="#217346" />
          <path d="M0 2.500L13 0v22L0 19.500z" fill="#1d7044" />
          <text x="6.500" y="15" fontSize="10.500" fontWeight="700" textAnchor="middle" fill="#fff">X</text>
        </svg>
        <i className="mt-auto h-[2px] w-12 bg-[#76b9ed]" />
      </div>
      <svg width="20" height="17" viewBox="0 0 20 17" className="ml-[404px] shrink-0">
        <defs>
          <linearGradient id="play" x1="0" x2="1" y1="0" y2="1">
            <stop offset="0" stopColor="#5f9bff" />
            <stop offset="1" stopColor="#6550f0" />
          </linearGradient>
        </defs>
        <rect width="20" height="17" rx="4" fill="url(#play)" />
        <path d="M7 4.500v8l7-4z" fill="#fff" />
      </svg>
      <Fit className="ml-[10px] w-[144px] text-[14px]">Why Duck Confit is th...</Fit>
      <svg width="12" height="7" viewBox="0 0 12 7" className="ml-[25px] shrink-0">
        <path d="M.6 6.400L6 1l5.400 5.400" fill="none" stroke="#fff" strokeWidth="1.300" />
      </svg>
      <svg width="16" height="14" viewBox="0 0 16 14" fill="none" stroke="#fff" className="ml-[10px] shrink-0">
        <path d="M6 1.500h9.500v8H4.500V6M8.500 9.500V13M4 13.500h9" strokeWidth="1.200" />
        <path d="M.5.500h4v4h-4zM2.500 4.500v5h2" />
      </svg>
      <svg width="17" height="14" viewBox="0 0 17 14" fill="none" stroke="#fff" className="ml-2 shrink-0">
        <path d="M.5 5v4.500H3l4 3.500V1L3 5zM9.500 5q1.500 2 0 4M11.500 3q3 4 0 8M13.500 1q5 6 0 12" />
      </svg>
      <Fit className="ml-[9px] w-[23px] text-[12px]">ENG</Fit>
      <div className="ml-[13px] flex w-[52px] flex-col items-center text-[12px] leading-[18px]">
        <Fit flat className="mr-0.5 w-[49px]">10:23 AM</Fit>
        <Fit flat className="w-[52px]">4/22/2025</Fit>
      </div>
      <svg width="25" height="26" viewBox="0 0 25 26" className="ml-[17px] mt-1 shrink-0">
        <path d="M1 2h16v12H8l-3 3.500V14H1z" fill="#fff" />
        <path d="M3 5.500h12M3 8.500h12M3 11.500h8" stroke="#1b2843" />
        <circle cx="16" cy="17" r="7.600" fill="#2c2f36" stroke="#8f959d" />
        <text x="16" y="21" fontSize="11" fontWeight="700" textAnchor="middle" fill="#fff">2</text>
      </svg>
      <i className="ml-[12px] h-10 w-px bg-[#5c6a7c]" />
    </footer>
  );
}

export default function App() {
  return (
    <div className="flex h-[900px] w-[1600px] flex-col overflow-hidden bg-[#e6e6e6] font-['Open_Sans','Noto_Sans',sans-serif]">
      <TitleBar />
      <Ribbon />
      <FormulaBar />
      <Sheet />
      <SheetTabs />
      <StatusBar />
      <Taskbar />
    </div>
  );
}
